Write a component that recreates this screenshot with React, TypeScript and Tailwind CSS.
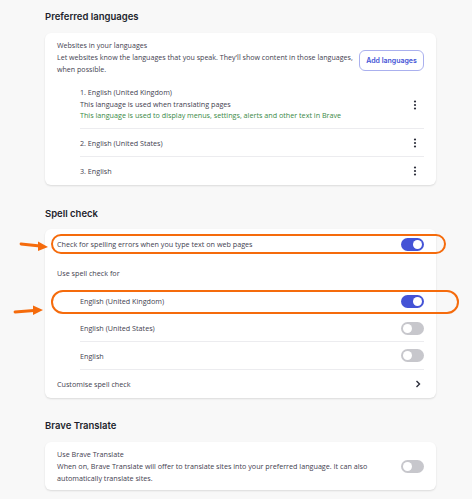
import React from "react";

const body = { fontFamily: '"Open Sans", "Noto Sans", sans-serif' };
const head = { fontFamily: 'Inter, "Noto Sans", sans-serif' };

const Toggle: React.FC<{ on?: boolean }> = ({ on }) => (
  <div
    className={`flex h-[13px] w-[23px] shrink-0 items-center rounded-full px-[2px] ${
      on ? "justify-end bg-[#4453d6]" : "justify-start bg-[#c7c7cc]"
    }`}
  >
    <div className="h-[9px] w-[9px] rounded-full bg-white" />
  </div>
);

const Kebab = () => (
  <svg width="4" height="10" viewBox="0 0 4 10" className="shrink-0">
    <circle cx="2" cy="1.5" r="1.1" fill="#2b2d3a" />
    <circle cx="2" cy="5" r="1.1" fill="#2b2d3a" />
    <circle cx="2" cy="8.5" r="1.1" fill="#2b2d3a" />
  </svg>
);

const Chevron = () => (
  <svg width="6" height="8" viewBox="0 0 6 8" className="shrink-0">
    <path d="M1.5 1 L4.5 4 L1.5 7" stroke="#2b2d3a" strokeWidth="1.4" fill="none" />
  </svg>
);

const Arrow: React.FC<{ className: string; d: string; head: string }> = ({
  className,
  d,
  head,
}) => (
  <svg width="34" height="14" viewBox="0 0 34 14" className={className}>
    <path d={d} stroke="#f56b0c" strokeWidth="2.8" fill="none" strokeLinecap="round" />
    <polygon points={head} fill="#f56b0c" />
  </svg>
);

const Heading: React.FC<{ children: React.ReactNode; className?: string }> = ({
  children,
  className = "",
}) => (
  <h2
    style={head}
    className={`h-[14px] text-[9.5px] leading-[14px] font-semibold text-[#1d1f2c] ${className}`}
  >
    {children}
  </h2>
);

const Card: React.FC<{ children: React.ReactNode; className?: string }> = ({
  children,
  className = "",
}) => (
  <div
    className={`relative rounded-[6px] bg-white shadow-[0_1px_2px_rgba(0,0,0,0.12)] ${className}`}
  >
    {children}
  </div>
);

export default function App() {
  return (
    <div
      style={body}
      className="relative min-h-[499px] w-[472px] bg-[#f8f8f8] pl-[45px] pr-[36px] pt-[10px] text-[7.2px] leading-[12px] text-[#3f4150]"
    >
      <Heading>Preferred languages</Heading>
      <Card className="mt-[9px]">
        <div className="flex items-start px-[12px] pt-[6px]">
          <div className="flex-1 text-[7.1px]">
            <div>Websites in your languages</div>
            <div>
              Let websites know the languages that you speak. They'll show content in those
              languages, when possible.
            </div>
          </div>
          <button
            style={head}
            className="mt-[11px] h-[21px] w-[65px] shrink-0 rounded-[6px] border border-[#aab0ee] text-[7px] font-semibold text-[#4453d6]"
          >
            Add languages
          </button>
        </div>
        <div className="ml-[35px] mr-[12px] mt-[6px]">
          <div className="flex h-[48px] items-center justify-between border-b border-[#ececef] leading-[11.5px]">
            <div>
              <div>1. English (United Kingdom)</div>
              <div>This language is used when translating pages</div>
              <div className="text-[#3a8a47]">
                This language is used to display menus, settings, alerts and other text in Brave
              </div>
            </div>
            <div className="pr-[7px]">
              <Kebab />
            </div>
          </div>
          <div className="flex h-[28px] items-center justify-between border-b border-[#ececef]">
            <div>2. English (United States)</div>
            <div className="pr-[7px]">
              <Kebab />
            </div>
          </div>
          <div className="flex h-[28px] items-center justify-between">
            <div>3. English</div>
            <div className="pr-[7px]">
              <Kebab />
            </div>
          </div>
        </div>
      </Card>

      <Heading className="mt-[22px]">Spell check</Heading>
      <Card className="mt-[8px]">
        <div className="relative flex h-[30px] items-center justify-between px-[12px]">
          <div>Check for spelling errors when you type text on web pages</div>
          <Toggle on />
          <div className="pointer-events-none absolute top-[5px] right-[-10px] left-[6px] h-[20px] rounded-[10px] border-[2.5px] border-[#f56b0c]" />
        </div>
        <div className="flex h-[28px] items-center px-[12px]">Use spell check for</div>
        <div className="relative">
          <div className="ml-[35px] mr-[12px] flex h-[28px] items-center justify-between">
            <div>English (United Kingdom)</div>
            <Toggle on />
          </div>
          <div className="pointer-events-none absolute top-[3px] right-[-23px] left-[6px] h-[24px] rounded-[12px] border-[2.5px] border-[#f56b0c]" />
        </div>
        <div className="ml-[35px] mr-[12px]">
          <div className="flex h-[27px] items-center justify-between border-b border-[#ececef]">
            <div>English (United States)</div>
            <Toggle />
          </div>
          <div className="flex h-[28px] items-center justify-between border-b border-[#ececef]">
            <div>English</div>
            <Toggle />
          </div>
        </div>
        <div className="flex h-[28px] items-center justify-between px-[12px]">
          <div>Customise spell check</div>
          <div className="pr-[3px]">
            <Chevron />
          </div>
        </div>
      </Card>

      <Heading className="mt-[21px]">Brave Translate</Heading>
      <Card className="mt-[9px]">
        <div className="flex items-center gap-[30px] px-[12px] py-[6px]">
          <div className="flex-1">
            <div>Use Brave Translate</div>
            <div>
              When on, Brave Translate will offer to translate sites into your preferred language.
              It can also automatically translate sites.
            </div>
          </div>
          <Toggle />
        </div>
      </Card>

      <Arrow
        className="absolute top-[238px] left-[17px]"
        d="M4 6 L23 8"
        head="31,9 21,3.5 21,13"
      />
      <Arrow
        className="absolute top-[304px] left-[12px]"
        d="M3 8 L22 6.5"
        head="31,6 21,1.5 21,11"
      />
    </div>
  );
}
